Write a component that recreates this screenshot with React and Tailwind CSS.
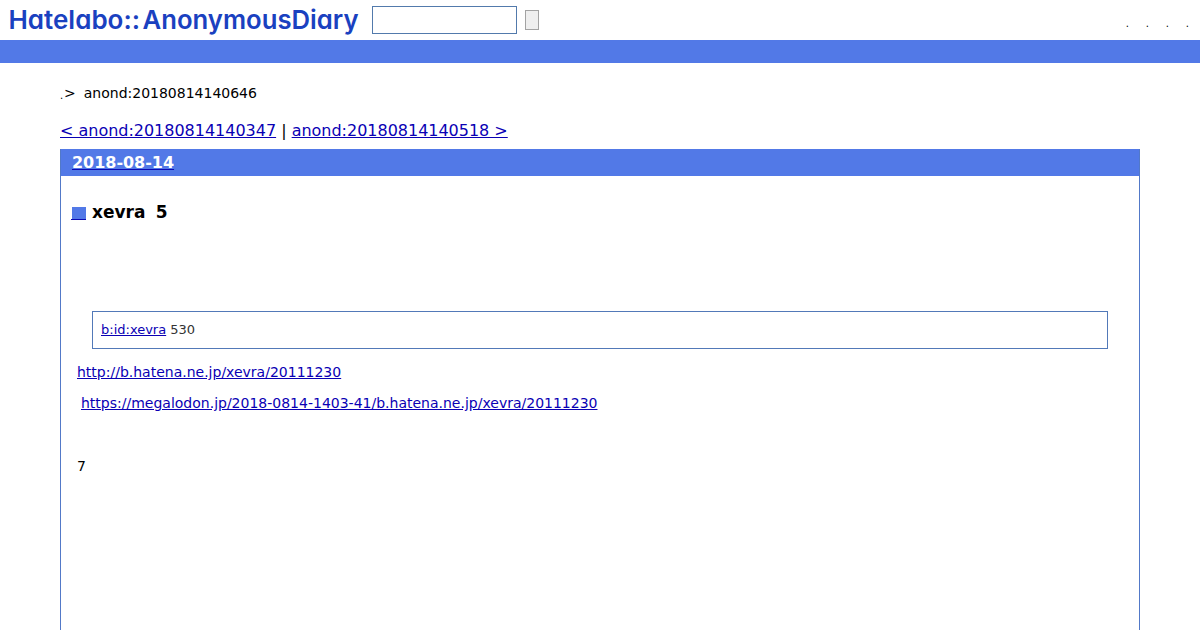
const navItems = ['.', '.', '.', '.']

function Logo() {
  return (
    <svg
      className="block h-10 w-[372px] flex-shrink-0 fill-[#1a41c0] font-['Inter',sans-serif] text-[26px] font-semibold [font-feature-settings:'cv11']"
      viewBox="0 0 372 40"
    >
      <text x="8.5" y="29" textLength="131.5" lengthAdjust="spacingAndGlyphs">Hatelabo::</text>
      <text x="142.5" y="29" textLength="216" lengthAdjust="spacingAndGlyphs">AnonymousDiary</text>
    </svg>
  )
}

function Header() {
  return (
    <header className="flex h-10 items-center">
      <Logo />
      <input className="h-7 w-[145px] border border-[#527aac] bg-white px-1 outline-none" />
      <button type="button" className="ml-2 h-5 w-3.5 border border-[#a3a3a3] bg-[#efefef]" />
      <nav className="ml-auto flex h-10 pt-[18px] pr-[11px] text-[10px] leading-3">
        {navItems.map((item, i) => (
          <span key={i} className="w-5 text-right">{item}</span>
        ))}
      </nav>
    </header>
  )
}

function Link({ children, className = 'text-[#0a00b4]' }) {
  return <a href="#" className={`underline ${className}`}>{children}</a>
}

function Entry() {
  return (
    <section className="h-[481px] border-x border-[#5279c8]">
      <h2 className="h-[27px] bg-[#5279e7] pl-[11px] text-base leading-[27px] font-bold tracking-[-0.03px]">
        <a href="#" className="text-white underline decoration-[#0a0ab4]">2018-08-14</a>
      </h2>
      <h3 className="mt-6 flex h-6 items-center pl-[10px] text-[17px] leading-6 font-bold">
        <a href="#" className="mt-[3px] h-[13px] w-[15px] border-b border-[#0a0ab4] pl-px">
          <span className="block h-3 w-[14px] bg-[#5279e7]" />
        </a>
        <span className="ml-1.5 whitespace-pre [word-spacing:-0.7px]">xevra  5</span>
      </h3>
      <div className="px-4 text-sm leading-[21px]">
        <blockquote className="mx-[15px] mt-[87px] h-[38px] border border-[#5279b8] pl-2 text-[13px] leading-9 text-[#333]">
          <Link>b:id:xevra</Link> 530
        </blockquote>
        <p className="mt-[13px]"><Link>http://b.hatena.ne.jp/xevra/20111230</Link></p>
        <p className="mt-[10px] pl-1"><Link>https://megalodon.jp/2018-0814-1403-41/b.hatena.ne.jp/xevra/20111230</Link></p>
        <p className="mt-[42px]">7</p>
      </div>
    </section>
  )
}

export default function App() {
  return (
    <div className="h-[630px] overflow-hidden bg-white font-['DejaVu_Sans',sans-serif] text-black">
      <Header />
      <div className="h-[23px] bg-[#5279e7]" />
      <main className="px-[60px]">
        <div className="mt-5 flex h-5 text-sm leading-5">
          <span className="w-1 text-[10px] leading-[26px]">.</span>
          <span>&gt;</span>
          <span className="ml-2">anond:20180814140646</span>
        </div>
        <div className="mt-4 h-[30px] text-base leading-6 tracking-[-0.015px]">
          <Link>&lt; anond:20180814140347</Link> | <Link>anond:20180814140518 &gt;</Link>
        </div>
        <Entry />
      </main>
    </div>
  )
}
